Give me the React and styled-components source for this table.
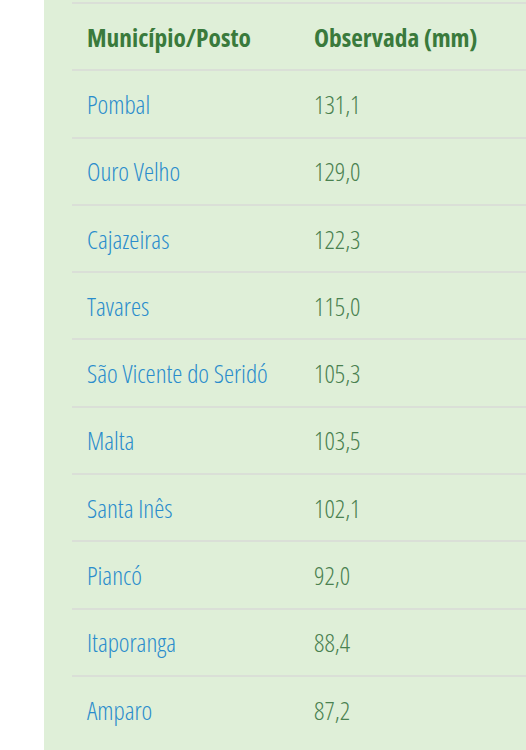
import React from 'react'
import styled, { createGlobalStyle } from 'styled-components'

const GlobalStyle = createGlobalStyle`
  html, body {
    margin: 0;
    padding: 0;
    background: #ffffff;
    overflow: hidden;
  }
`

const Page = styled.div`
  display: flex;
  width: 526px;
  height: 750px;
  background: #ffffff;
`

const Panel = styled.div`
  margin-left: 44px;
  flex: 1;
  background: #dfefd8;
  padding-left: 28px;
  padding-top: 2px;
`

const Table = styled.table`
  width: 100%;
  border-collapse: collapse;
  table-layout: fixed;
  font-family: 'Open Sans', 'Liberation Sans', sans-serif;
  font-stretch: 75%;
`

const Col = styled.col`
  width: ${(p) => p.w || 'auto'};
`

const Cell = styled.td`
  border-top: 2px solid #dadfd7;
  height: 65.3px;
  padding: 0 0 0 15px;
  vertical-align: middle;
  font-size: 25.5px;
  font-weight: 300;
  white-space: nowrap;
  color: ${(p) => (p.num ? '#4a8150' : '#2a8ccc')};
`

const HeadCell = styled.th`
  border-top: 2px solid #dadfd7;
  height: 65.3px;
  padding: 0 0 0 15px;
  text-align: left;
  vertical-align: middle;
  font-size: 25.4px;
  font-weight: 700;
  white-space: nowrap;
  color: #3a7a3c;
`

const rows = [
  ['Pombal', '131,1'],
  ['Ouro Velho', '129,0'],
  ['Cajazeiras', '122,3'],
  ['Tavares', '115,0'],
  ['São Vicente do Seridó', '105,3'],
  ['Malta', '103,5'],
  ['Santa Inês', '102,1'],
  ['Piancó', '92,0'],
  ['Itaporanga', '88,4'],
  ['Amparo', '87,2'],
]

export default function App() {
  return (
    <Page>
      <GlobalStyle />
      <Panel>
        <Table>
          <colgroup>
            <Col w="227px" />
            <Col />
          </colgroup>
          <thead>
            <tr>
              <HeadCell>Município/Posto</HeadCell>
              <HeadCell>Observada (mm)</HeadCell>
            </tr>
          </thead>
          <tbody>
            {rows.map(([name, value]) => (
              <tr key={name}>
                <Cell>{name}</Cell>
                <Cell num>{value}</Cell>
              </tr>
            ))}
          </tbody>
        </Table>
      </Panel>
    </Page>
  )
}
